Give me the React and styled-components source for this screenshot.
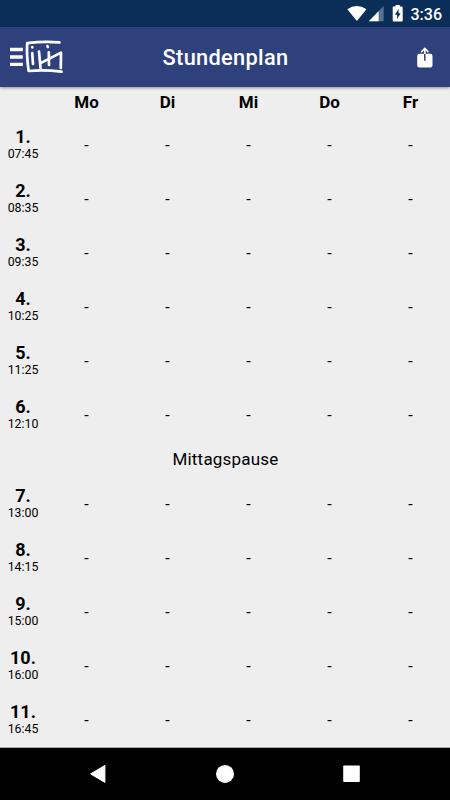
import React from "react";
import styled, { createGlobalStyle } from "styled-components";

const days = ["Mo", "Di", "Mi", "Do", "Fr"];

const morning = [
  { nr: 1, time: "07:45" },
  { nr: 2, time: "08:35" },
  { nr: 3, time: "09:35" },
  { nr: 4, time: "10:25" },
  { nr: 5, time: "11:25" },
  { nr: 6, time: "12:10" },
];

const afternoon = [
  { nr: 7, time: "13:00" },
  { nr: 8, time: "14:15" },
  { nr: 9, time: "15:00" },
  { nr: 10, time: "16:00" },
  { nr: 11, time: "16:45" },
];

const StatusIcons = () => (
  <svg width="60" height="20" viewBox="0 0 60 20">
    <path d="M0.3 5.2 Q9.9 -1.4 19.5 5.2 L9.9 17 Z" fill="#fff" />
    <path d="M36.6 2 V17.2 H21.8 Z" fill="#547291" />
    <path d="M31.6 7.3 V17.2 H21.8 Z" fill="#fff" />
    <path
      d="M48.6 1 h4.2 v1.6 h2 q0.9 0 0.9 0.9 v13 q0 0.9 -0.9 0.9 h-8.2 q-0.9 0 -0.9 -0.9 v-13 q0 -0.9 0.9 -0.9 h2 z"
      fill="#fff"
    />
    <path d="M51.6 5.1 L47.9 10.7 H50.1 V15.1 L53.7 9.3 H51.6 Z" fill="#0b2e59" />
  </svg>
);

const MenuLogo = () => (
  <svg width="56" height="38" viewBox="0 0 56 38" fill="none" stroke="#fff">
    <path d="M2 11.5H14.8M2 19H14.8M2 26.4H14.8" strokeWidth="3.3" />
    <g strokeWidth="2.7" strokeLinecap="round" strokeLinejoin="round">
      <path d="M51.5 4.4 Q36 3 19.2 5.2 Q18.4 18 20.7 33 Q36 31.4 53.5 33.7" />
      <path d="M24.2 15 L25 26M24.2 9.2 L24.3 9.4" />
      <path d="M31 13.5 L32.5 30M32.2 25.4 L53 14.6 L52.8 30" />
      <path d="M40.8 14.4 L41 27M39.4 8.2 L39.8 9" />
    </g>
  </svg>
);

const ShareIcon = () => (
  <svg width="16" height="21" viewBox="0 0 16 21" fill="none">
    <rect x="0.2" y="6.8" width="15.3" height="13.6" rx="2.2" fill="#fff" />
    <path d="M7.8 6.8 V13.8" stroke="#2e417d" strokeWidth="1.5" />
    <path d="M7.8 7 V2 M4.2 5.1 L7.8 1.5 L11.4 5.1" stroke="#fff" strokeWidth="1.6" />
  </svg>
);

const LessonRow = ({ nr, time }) => (
  <Row>
    <Period>
      <strong>{nr}.</strong>
      <span>{time}</span>
    </Period>
    {days.map((day) => (
      <Cell key={day}>-</Cell>
    ))}
  </Row>
);

const App = () => {
  return (
    <Screen>
      <GlobalStyle />
      <StatusBar>
        <StatusIcons />
        <Clock>3:36</Clock>
      </StatusBar>
      <AppBar>
        <BarButton aria-label="Menu">
          <MenuLogo />
        </BarButton>
        <Title>Stundenplan</Title>
        <BarButton aria-label="Teilen" $end>
          <ShareIcon />
        </BarButton>
      </AppBar>
      <Timetable>
        <HeaderRow>
          <span />
          {days.map((day) => (
            <Day key={day}>{day}</Day>
          ))}
        </HeaderRow>
        {morning.map((lesson) => (
          <LessonRow key={lesson.nr} {...lesson} />
        ))}
        <Break>Mittagspause</Break>
        {afternoon.map((lesson) => (
          <LessonRow key={lesson.nr} {...lesson} />
        ))}
      </Timetable>
      <NavBar>
        <svg width="18" height="20" viewBox="0 0 18 20">
          <path d="M14.9 1.4 V18.4 L0.6 9.9 Z" fill="#fff" stroke="#fff" strokeLinejoin="round" />
        </svg>
        <svg width="18" height="20" viewBox="0 0 18 20">
          <circle cx="9" cy="9.9" r="9" fill="#fff" />
        </svg>
        <svg width="18" height="20" viewBox="0 0 18 20">
          <rect x="1.2" y="1.4" width="16.6" height="16.6" rx="0.8" fill="#fff" />
        </svg>
      </NavBar>
    </Screen>
  );
};

const GlobalStyle = createGlobalStyle`
  body {
    margin: 0;
  }

  * {
    box-sizing: border-box;
  }
`;

const Screen = styled.div`
  display: flex;
  flex-direction: column;
  width: 450px;
  height: 800px;
  overflow: hidden;
  background: #eeeeee;
  color: #000;
  font-family: Roboto, sans-serif;
`;

const StatusBar = styled.div`
  display: flex;
  flex: none;
  align-items: center;
  justify-content: flex-end;
  gap: 4px;
  height: 27px;
  padding-right: 8px;
  background: #0b2e59;
`;

const Clock = styled.span`
  color: #fff;
  font-size: 16px;
  font-weight: 500;
  line-height: 27px;
  padding-top: 1px;
`;

const AppBar = styled.header`
  display: grid;
  grid-template-columns: 1fr auto 1fr;
  align-items: center;
  flex: none;
  height: 60px;
  padding: 0 8px;
  background: #2e417d;
  box-shadow: 0 1px 3px rgba(0, 0, 0, 0.4);
  z-index: 1;
`;

const BarButton = styled.button`
  display: flex;
  justify-self: ${(props) => (props.$end ? "end" : "start")};
  margin: 0;
  padding: ${(props) => (props.$end ? "0 9px" : "0")};
  border: none;
  background: none;
`;

const Title = styled.h1`
  margin: 0;
  color: #fff;
  font-size: 21.8px;
  font-weight: 500;
  letter-spacing: 0.3px;
  padding-left: 1px;
`;

const Timetable = styled.main`
  flex: 1;
  min-height: 0;
  overflow: hidden;
  border-bottom: 1px solid #a8a8a8;
`;

const Row = styled.div`
  display: grid;
  grid-template-columns: 46px repeat(5, 81px);
  align-items: center;
  height: 54.1px;
`;

const HeaderRow = styled(Row)`
  height: 30.5px;
`;

const Day = styled.span`
  font-size: 17px;
  font-weight: 700;
  text-align: center;
`;

const Period = styled.div`
  display: flex;
  flex-direction: column;
  align-items: center;
  padding-bottom: 2px;

  strong {
    font-size: 18px;
    font-weight: 700;
    line-height: 20px;
  }

  span {
    font-size: 12.3px;
    line-height: 14px;
  }
`;

const Cell = styled.span`
  padding-top: 1px;
  font-size: 16px;
  text-align: center;
`;

const Break = styled.div`
  height: 35px;
  padding-left: 1px;
  font-size: 17px;
  letter-spacing: 0.2px;
  line-height: 35px;
  text-align: center;
`;

const NavBar = styled.nav`
  display: flex;
  flex: none;
  align-items: center;
  justify-content: center;
  gap: 108px;
  height: 52px;
  background: #000;
`;

export default App;
